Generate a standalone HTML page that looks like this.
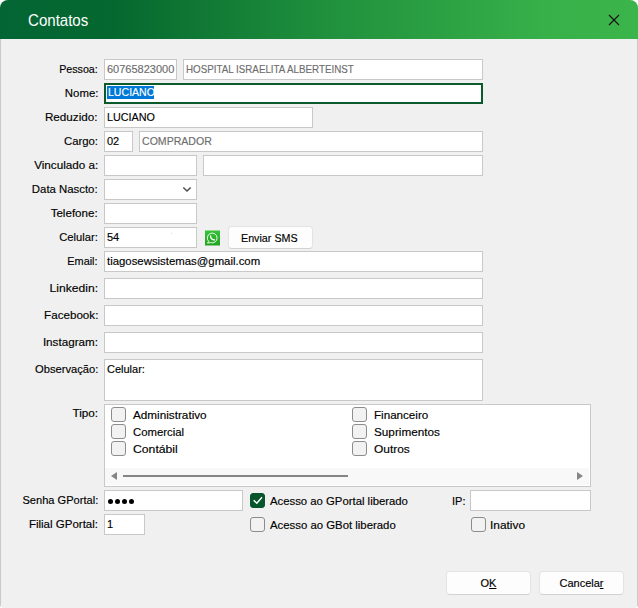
<!DOCTYPE html>
<html><head><meta charset="utf-8">
<style>
*{margin:0;padding:0;box-sizing:border-box}
html,body{width:638px;height:608px;overflow:hidden;background:#fff}
body{font-family:"Liberation Sans",sans-serif;font-size:11px;color:#000;position:relative;-webkit-text-stroke:0.15px currentColor}
.win{position:absolute;left:0;top:0;width:638px;height:608px;background:#f0f0f0;border-radius:8px 8px 4px 4px;overflow:hidden}
.hdr{position:absolute;left:0;top:0;width:638px;height:39px;background:linear-gradient(90deg,#036534 0%,#05682f 18%,#1f8f3c 50%,#37b049 85%,#3bb54a 100%)}
.title{-webkit-text-stroke:0;position:absolute;left:28px;top:11px;font-size:15.7px;color:#fff;line-height:19px;transform:scaleX(0.96);transform-origin:0 0}
.x{position:absolute;left:608px;top:14px;width:12px;height:12px}
.lb{position:absolute;right:540px;white-space:nowrap;line-height:21px;height:21px;text-align:right}
.lb .s{transform-origin:100% 50%}
.s{display:inline-block;transform-origin:0 50%}
.in{position:absolute;background:#fff;border:1px solid #c8c8c8;line-height:19px;padding-left:2px;white-space:nowrap;overflow:hidden}
.g{color:#6d6d6d}
.bl{position:absolute;left:0;top:39px;width:1px;height:569px;background:#c9c9c9}
.br{position:absolute;left:637px;top:39px;width:1px;height:569px;background:#c9c9c9}
.cb{position:absolute;width:15px;height:15px;border:1px solid #8c8c8c;border-radius:3px;background:#f2f2f2}
.ct{position:absolute;white-space:nowrap;line-height:15px;margin-top:1px}
.btn{position:absolute;background:#fdfdfd;border-radius:4px;border:1px solid #e3e3e3;border-bottom-color:#d2d2d2;text-align:center;line-height:20px}
.dot{position:absolute;width:5px;height:5px;border-radius:50%;background:#000}
</style></head><body>
<div class="win">
<div class="hdr"></div>
<div class="title">Contatos</div>
<svg class="x" viewBox="0 0 12 12"><path d="M1 1L11 11M11 1L1 11" stroke="#111" stroke-width="1.1"/></svg>
<div class="bl"></div><div class="br"></div>

<div class="lb" style="top:59px"><span class="s" style="transform:scaleX(0.97)">Pessoa:</span></div>
<div class="lb" style="top:83px"><span class="s" style="transform:scaleX(1.035)">Nome:</span></div>
<div class="lb" style="top:107px"><span class="s" style="transform:scaleX(1.0625)">Reduzido:</span></div>
<div class="lb" style="top:131px"><span class="s" style="transform:scaleX(1.03)">Cargo:</span></div>
<div class="lb" style="top:155px"><span class="s" style="transform:scaleX(1.064)">Vinculado a:</span></div>
<div class="lb" style="top:179px"><span class="s" style="transform:scaleX(1.034)">Data Nascto:</span></div>
<div class="lb" style="top:203px"><span class="s" style="transform:scaleX(1.053)">Telefone:</span></div>
<div class="lb" style="top:227px"><span class="s" style="transform:scaleX(1.02)">Celular:</span></div>
<div class="lb" style="top:251px"><span class="s" style="transform:scaleX(0.99)">Email:</span></div>
<div class="lb" style="top:278px"><span class="s" style="transform:scaleX(1.1)">Linkedin:</span></div>
<div class="lb" style="top:305px"><span class="s" style="transform:scaleX(1.057)">Facebook:</span></div>
<div class="lb" style="top:332px"><span class="s" style="transform:scaleX(1.06)">Instagram:</span></div>
<div class="lb" style="top:359px"><span class="s" style="transform:scaleX(1.015)">Observação:</span></div>
<div class="lb" style="top:403px"><span class="s" style="transform:scaleX(1.065)">Tipo:</span></div>
<div class="lb" style="top:490px"><span class="s" style="transform:scaleX(1.008)">Senha GPortal:</span></div>
<div class="lb" style="top:514px"><span class="s" style="transform:scaleX(1.047)">Filial GPortal:</span></div>

<div class="in g" style="left:104px;top:59px;width:73px;height:21px">60765823000</div>
<div class="in g" style="left:183px;top:59px;width:300px;height:21px"><span class="s" style="transform:scaleX(0.89)">HOSPITAL ISRAELITA ALBERTEINST</span></div>
<div class="in" style="left:104px;top:83px;width:379px;height:21px;border:2px solid #0b5a2c;padding-left:1px;line-height:17px"><span style="display:inline-block;vertical-align:top;margin-top:1px;background:#0078d7;color:#fff;padding:0 1px;line-height:13px;height:13px;width:47px;overflow:hidden"><span class="s" style="transform:scaleX(0.96)">LUCIANO</span></span></div>
<div class="in" style="left:104px;top:107px;width:209px;height:21px"><span class="s" style="transform:scaleX(0.98)">LUCIANO</span></div>
<div class="in" style="left:104px;top:131px;width:29px;height:21px">02</div>
<div class="in g" style="left:139px;top:131px;width:344px;height:21px"><span class="s" style="transform:scaleX(0.96)">COMPRADOR</span></div>
<div class="in" style="left:104px;top:155px;width:93px;height:21px"></div>
<div class="in" style="left:203px;top:155px;width:280px;height:21px"></div>
<div class="in" style="left:104px;top:179px;width:93px;height:21px"></div>
<svg style="position:absolute;left:182px;top:186px" width="10" height="7" viewBox="0 0 10 7"><path d="M1.3 1.5L5 5L8.7 1.5" fill="none" stroke="#505050" stroke-width="1.6"/></svg>
<div class="in" style="left:104px;top:203px;width:93px;height:21px"></div>
<div class="in" style="left:104px;top:227px;width:93px;height:21px">54</div>
<div style="position:absolute;left:171px;top:233px;width:1px;height:1px;background:#c6dcf5"></div>
<svg style="position:absolute;left:205px;top:230px" width="15" height="16" viewBox="0 0 15 16"><defs><linearGradient id="wg" x1="0" y1="0" x2="0" y2="1"><stop offset="0" stop-color="#38c238"/><stop offset="1" stop-color="#22a322"/></linearGradient></defs><rect x="0" y="0.5" width="15" height="15" fill="url(#wg)"/><path d="M3.74 11.46L2.4 13.1L5.6 12.63A4.9 4.9 0 1 0 3.74 11.46Z" fill="none" stroke="#fff" stroke-width="0.9"/><path d="M5.6 5.9C5.6 7.9 7.3 9.7 9.5 9.9" fill="none" stroke="#fff" stroke-width="1.3" stroke-linecap="round"/></svg>
<div class="btn" style="left:228px;top:226px;width:85px;height:23px;line-height:22px"><span class="s" style="transform:scaleX(0.975)">Enviar SMS</span></div>
<div class="in" style="left:104px;top:251px;width:379px;height:21px"><span class="s" style="transform:scaleX(1.034)">tiagosewsistemas@gmail.com</span></div>
<div class="in" style="left:104px;top:278px;width:379px;height:21px"></div>
<div class="in" style="left:104px;top:305px;width:379px;height:21px"></div>
<div class="in" style="left:104px;top:332px;width:379px;height:21px"></div>
<div class="in" style="left:104px;top:359px;width:379px;height:42px;line-height:19px">Celular:</div>

<div class="in" style="left:104px;top:404px;width:487px;height:83px"></div>
<div style="position:absolute;left:105px;top:468px;width:484px;height:17px;background:#f8f8f8"></div>
<svg style="position:absolute;left:111px;top:472px" width="7" height="8"><path d="M6 0V8L0 4z" fill="#858585"/></svg>
<svg style="position:absolute;left:577px;top:472px" width="7" height="8"><path d="M0 0V8L6 4z" fill="#858585"/></svg>
<div style="position:absolute;left:123px;top:475px;width:225px;height:2px;background:#858585"></div>

<div class="cb" style="left:111px;top:407px"></div><div class="ct" style="left:133px;top:407px"><span class="s" style="transform:scaleX(1.066)">Administrativo</span></div>
<div class="cb" style="left:111px;top:424px"></div><div class="ct" style="left:133px;top:424px"><span class="s" style="transform:scaleX(1.03)">Comercial</span></div>
<div class="cb" style="left:111px;top:441px"></div><div class="ct" style="left:133px;top:441px"><span class="s" style="transform:scaleX(1.11)">Contábil</span></div>
<div class="cb" style="left:352px;top:407px"></div><div class="ct" style="left:374px;top:407px"><span class="s" style="transform:scaleX(1.056)">Financeiro</span></div>
<div class="cb" style="left:352px;top:424px"></div><div class="ct" style="left:374px;top:424px"><span class="s" style="transform:scaleX(1.068)">Suprimentos</span></div>
<div class="cb" style="left:352px;top:441px"></div><div class="ct" style="left:374px;top:441px"><span class="s" style="transform:scaleX(1.085)">Outros</span></div>

<div class="in" style="left:104px;top:490px;width:139px;height:21px"></div>
<div class="dot" style="left:108px;top:499px"></div><div class="dot" style="left:115px;top:499px"></div><div class="dot" style="left:122px;top:499px"></div><div class="dot" style="left:129px;top:499px"></div>
<div class="in" style="left:104px;top:514px;width:41px;height:21px">1</div>

<div class="cb" style="left:250px;top:493px;background:#06552b;border-color:#06552b"><svg width="13" height="13" style="position:absolute;left:0;top:0" viewBox="0 0 13 13"><path d="M2.7 6.3L5.8 9.2L11 3.2" fill="none" stroke="#fff" stroke-width="1.5"/></svg></div>
<div class="ct" style="left:270px;top:493px"><span class="s" style="transform:scaleX(1.03)">Acesso ao GPortal liberado</span></div>
<div class="cb" style="left:250px;top:517px"></div>
<div class="ct" style="left:270px;top:517px"><span class="s" style="transform:scaleX(1.033)">Acesso ao GBot liberado</span></div>

<div class="ct" style="left:452px;top:493px">IP:</div>
<div class="in" style="left:470px;top:490px;width:121px;height:21px"></div>
<div class="cb" style="left:471px;top:517px"></div>
<div class="ct" style="left:490px;top:517px"><span class="s" style="transform:scaleX(1.08)">Inativo</span></div>

<div class="btn" style="left:446px;top:571px;width:85px;height:24px;line-height:22px">O<u>K</u></div>
<div class="btn" style="left:539px;top:571px;width:85px;height:24px;line-height:22px">Cancela<u>r</u></div>
</div>
</body></html>
